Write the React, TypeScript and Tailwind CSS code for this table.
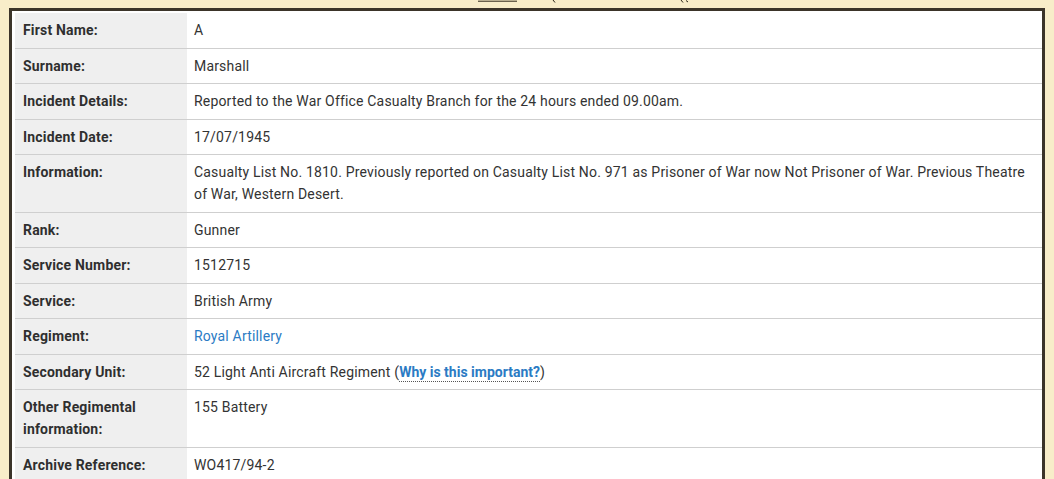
import React from "react";

type Row = { label: React.ReactNode; value: React.ReactNode };

const rows: Row[] = [
  { label: "First Name:", value: "A" },
  { label: "Surname:", value: "Marshall" },
  {
    label: "Incident Details:",
    value: "Reported to the War Office Casualty Branch for the 24 hours ended 09.00am.",
  },
  { label: "Incident Date:", value: "17/07/1945" },
  {
    label: "Information:",
    value:
      "Casualty List No. 1810. Previously reported on Casualty List No. 971 as Prisoner of War now Not Prisoner of War. Previous Theatre of War, Western Desert.",
  },
  { label: "Rank:", value: "Gunner" },
  { label: "Service Number:", value: "1512715" },
  { label: "Service:", value: "British Army" },
  {
    label: "Regiment:",
    value: <a className="text-[#2b7bc4] no-underline" href="#">Royal Artillery</a>,
  },
  {
    label: "Secondary Unit:",
    value: (
      <span>
        52 Light Anti Aircraft Regiment (
        <span className="font-bold tracking-[0px] text-[#2b7bc4] border-b border-dotted border-[#555] pb-[1px]">
          Why is this important?
        </span>
        )
      </span>
    ),
  },
  { label: "Other Regimental information:", value: "155 Battery" },
  { label: "Archive Reference:", value: "WO417/94-2" },
];

export default function App() {
  return (
    <div
      className="w-[1054px] h-[479px] overflow-hidden bg-[#f8edc9] text-[14px] leading-[22px] tracking-[0.18px] text-[#333]"
      style={{ fontFamily: "Roboto, 'Liberation Sans', sans-serif" }}
    >
      <svg width="1054" height="8" className="block">
        <path d="M478 1.2 L517 1.2" stroke="#2a2418" strokeWidth="1" fill="none" />
        <path d="M553 0 L555 2.5" stroke="#2a2418" strokeWidth="1" fill="none" />
        <path d="M681 0 L683 2.5 M686 0.5 L688 2" stroke="#2a2418" strokeWidth="1" fill="none" />
      </svg>
      <div className="ml-[9px] w-[1036px] border-[3px] border-b-0 border-[#3b3429] bg-white pl-[3px] pt-[2px] h-[480px]">
        <table className="w-[1027px] border-collapse">
          <tbody>
            {rows.map((r, i) => (
              <tr key={i} className={i === 0 ? "" : "border-t border-[#cfcfcf]"}>
                <td className="w-[172px] bg-[#efefef] pl-[8px] pr-[6px] py-[6.25px] align-top font-bold text-[#2f2f2f]">
                  {r.label}
                </td>
                <td className="pl-[7px] pr-2 py-[6.25px] align-top">{r.value}</td>
              </tr>
            ))}
          </tbody>
        </table>
      </div>
    </div>
  );
}
